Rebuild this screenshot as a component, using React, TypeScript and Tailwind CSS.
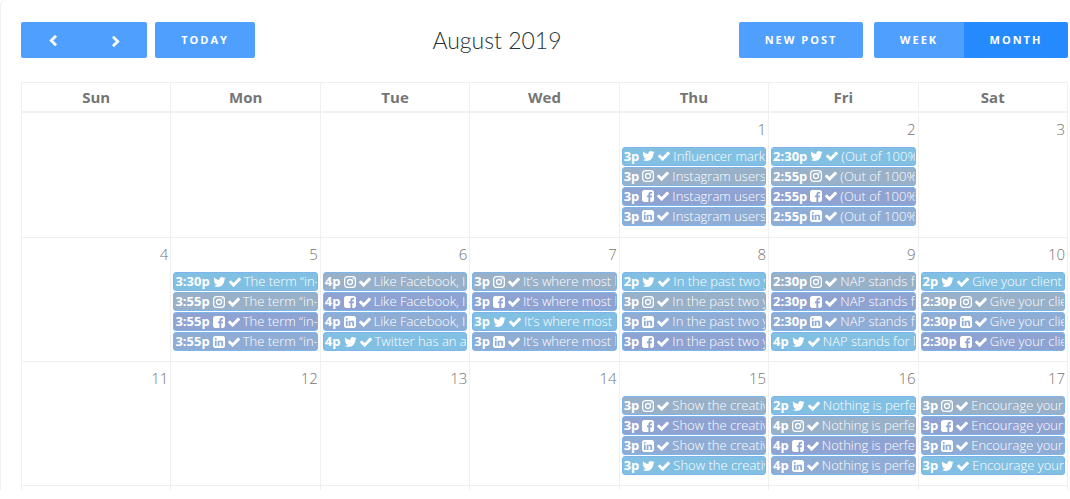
type Network = "twitter" | "instagram" | "facebook" | "linkedin";

type Post = {
	time: string;
	network: Network;
	title: string;
};

type Day = {
	date: number | null;
	posts: Post[];
};

const post = (time: string, network: Network, title: string): Post => ({ time, network, title });

const day = (date: number | null, posts: Post[] = []): Day => ({ date, posts });

const weekdays = ["Sun", "Mon", "Tue", "Wed", "Thu", "Fri", "Sat"];

const weeks: Day[][] = [
	[
		day(null),
		day(null),
		day(null),
		day(null),
		day(1, [
			post("3p", "twitter", "Influencer mark"),
			post("3p", "instagram", "Instagram users"),
			post("3p", "facebook", "Instagram users"),
			post("3p", "linkedin", "Instagram users"),
		]),
		day(2, [
			post("2:30p", "twitter", "(Out of 100%"),
			post("2:55p", "instagram", "(Out of 100%"),
			post("2:55p", "facebook", "(Out of 100%"),
			post("2:55p", "linkedin", "(Out of 100%"),
		]),
		day(3),
	],
	[
		day(4),
		day(5, [
			post("3:30p", "twitter", "The term “in-"),
			post("3:55p", "instagram", "The term “in-"),
			post("3:55p", "facebook", "The term “in-"),
			post("3:55p", "linkedin", "The term “in-"),
		]),
		day(6, [
			post("4p", "instagram", "Like Facebook, I"),
			post("4p", "facebook", "Like Facebook, I"),
			post("4p", "linkedin", "Like Facebook, I"),
			post("4p", "twitter", "Twitter has an a"),
		]),
		day(7, [
			post("3p", "instagram", "It’s where most l"),
			post("3p", "facebook", "It’s where most l"),
			post("3p", "twitter", "It’s where most"),
			post("3p", "linkedin", "It’s where most l"),
		]),
		day(8, [
			post("2p", "twitter", "In the past two y"),
			post("3p", "instagram", "In the past two y"),
			post("3p", "linkedin", "In the past two y"),
			post("3p", "facebook", "In the past two y"),
		]),
		day(9, [
			post("2:30p", "instagram", "NAP stands fo"),
			post("2:30p", "facebook", "NAP stands fo"),
			post("2:30p", "linkedin", "NAP stands fo"),
			post("4p", "twitter", "NAP stands for l"),
		]),
		day(10, [
			post("2p", "twitter", "Give your client"),
			post("2:30p", "instagram", "Give your clie"),
			post("2:30p", "linkedin", "Give your clie"),
			post("2:30p", "facebook", "Give your clie"),
		]),
	],
	[
		day(11),
		day(12),
		day(13),
		day(14),
		day(15, [
			post("3p", "instagram", "Show the creativ"),
			post("3p", "facebook", "Show the creativ"),
			post("3p", "linkedin", "Show the creativ"),
			post("3p", "twitter", "Show the creativ"),
		]),
		day(16, [
			post("2p", "twitter", "Nothing is perfe"),
			post("4p", "instagram", "Nothing is perfe"),
			post("4p", "facebook", "Nothing is perfe"),
			post("4p", "linkedin", "Nothing is perfe"),
		]),
		day(17, [
			post("3p", "instagram", "Encourage your"),
			post("3p", "facebook", "Encourage your"),
			post("3p", "linkedin", "Encourage your"),
			post("3p", "twitter", "Encourage your"),
		]),
	],
];

const eventColors: Record<Network, string> = {
	twitter: "bg-[#82c0e3]",
	instagram: "bg-[#98b0c8]",
	facebook: "bg-[#8fa3d2]",
	linkedin: "bg-[#8facd5]",
};

const NetworkIcon = ({ network }: { network: Network }) => {
	if (network === "instagram") {
		return (
			<svg className="size-3 shrink-0" viewBox="0 0 24 24" fill="none" stroke="currentColor" strokeWidth="2.6">
				<rect x="1.3" y="1.3" width="21.4" height="21.4" rx="5.6" />
				<circle cx="12" cy="12" r="5" />
				<circle cx="18.3" cy="5.7" r="1.5" fill="currentColor" stroke="none" />
			</svg>
		);
	}
	if (network === "twitter") {
		return (
			<svg className="h-3 w-[13px] shrink-0" viewBox="64 128 1664 1536" fill="currentColor">
				<path d="M1684 408q-67 98-162 167 1 14 1 42 0 130-38 259.5t-115.5 248.5-184.5 210.5-258 146-323 54.5q-271 0-496-145 35 4 78 4 225 0 401-138-105-2-188-64.5t-114-159.5q33 5 61 5 43 0 85-11-112-23-185.5-111.5t-73.5-205.5v-4q68 38 146 41-66-44-105-115t-39-154q0-88 44-163 121 149 294.5 238.5t371.5 99.5q-8-38-8-74 0-134 94.5-228.5t228.5-94.5q140 0 236 102 109-21 205-78-37 115-142 178 93-10 186-50z" />
			</svg>
		);
	}
	return (
		<svg className="size-3 shrink-0" viewBox="128 128 1536 1536" fill="currentColor">
			{network === "facebook" ? (
				<path d="M1376 128q119 0 203.5 84.5t84.5 203.5v960q0 119-84.5 203.5t-203.5 84.5h-188v-595h199l30-232h-229v-148q0-56 23.5-84t91.5-28l122-1v-207q-63-9-178-9-136 0-217.5 80t-81.5 226v171h-200v232h200v595h-532q-119 0-203.5-84.5t-84.5-203.5v-960q0-119 84.5-203.5t203.5-84.5h960z" />
			) : (
				<path d="M365 1414h231v-694h-231v694zm246-908q-1-52-36-86t-93-34-94.5 34-36.5 86q0 51 35.5 85.5t92.5 34.5h1q59 0 95-34.5t36-85.5zm585 908h231v-398q0-154-73-233t-193-79q-136 0-209 117h2v-101h-231q3 66 0 694h231v-388q0-38 7-56 15-35 45-59.5t74-24.5q116 0 116 157v371zm468-998v960q0 119-84.5 203.5t-203.5 84.5h-960q-119 0-203.5-84.5t-84.5-203.5v-960q0-119 84.5-203.5t203.5-84.5h960q119 0 203.5 84.5t84.5 203.5z" />
			)}
		</svg>
	);
};

const CheckIcon = () => (
	<svg className="h-[14px] w-3 shrink-0" viewBox="121 0 1550 1792" fill="currentColor">
		<path d="M1671 566q0 40-28 68l-724 724-136 136q-28 28-68 28t-68-28l-136-136-362-362q-28-28-28-68t28-68l136-136q28-28 68-28t68 28l294 295 656-657q28-28 68-28t68 28l136 136q28 28 28 68z" />
	</svg>
);

const Chevron = ({ flip = false }: { flip?: boolean }) => (
	<svg className={flip ? "size-3 rotate-180" : "size-3"} viewBox="0 0 1792 1792" fill="currentColor" stroke="currentColor" strokeWidth="80">
		<path d="M1427 301l-531 531 531 531q19 19 19 45t-19 45l-166 166q-19 19-45 19t-45-19l-742-742q-19-19-19-45t19-45l742-742q19-19 45-19t45 19l166 166q19 19 19 45t-19 45z" />
	</svg>
);

const PostEvent = ({ time, network, title }: Post) => (
	<a
		href="#"
		className={`mb-px flex h-[19px] items-center gap-[3px] overflow-hidden rounded-[3px] border border-[#7db5ea] pl-px text-[13px] leading-[17px] whitespace-nowrap text-white ${eventColors[network]}`}
	>
		<span className="font-bold">{time}</span>
		<NetworkIcon network={network} />
		<CheckIcon />
		<span className="font-light">{title}</span>
	</a>
);

const toolbarButton = "h-9 pt-px text-[11px] font-bold uppercase text-white";

const Toolbar = () => (
	<div className="flex items-center justify-between tracking-[2px]">
		<div className="flex gap-2">
			<div className="flex">
				<button aria-label="Previous month" className={`${toolbarButton} flex w-[63px] items-center justify-center rounded-l-[2px] bg-[#4f9fff]`}>
					<Chevron />
				</button>
				<button aria-label="Next month" className={`${toolbarButton} flex w-[63px] items-center justify-center rounded-r-[2px] bg-[#4f9fff]`}>
					<Chevron flip />
				</button>
			</div>
			<button className={`${toolbarButton} w-[100px] rounded-[2px] bg-[#4f9fff]`}>Today</button>
		</div>
		<h2 className="font-['Lato'] text-[23px] leading-9 font-light tracking-normal text-[#263238]">August 2019</h2>
		<div className="flex gap-[11px]">
			<button className={`${toolbarButton} w-[124px] rounded-[2px] bg-[#4f9fff]`}>New Post</button>
			<div className="flex">
				<button className={`${toolbarButton} w-[90px] rounded-l-[2px] bg-[#4f9fff]`}>Week</button>
				<button aria-pressed="true" className={`${toolbarButton} w-[104px] rounded-r-[2px] bg-[#268aff]`}>
					Month
				</button>
			</div>
		</div>
	</div>
);

const App = () => {
	return (
		<div className="overflow-hidden rounded-tl-md border-l border-[#f0f0f0] bg-white pt-[22px] pr-[2px] pl-5 font-['Open_Sans',sans-serif] text-[#757575]">
			<Toolbar />
			<table className="mt-6 w-full table-fixed border-collapse">
				<thead>
					<tr>
						{weekdays.map((name) => (
							<th key={name} className="h-[29px] border border-b-2 border-[#f0f0f0] p-0 text-[15px] leading-5 font-bold">
								{name}
							</th>
						))}
					</tr>
				</thead>
				<tbody>
					{weeks.map((week, index) => (
						<tr key={index} className="h-[124px] first:h-[126px]">
							{week.map((d, i) => (
								<td key={i} className="border border-[#f0f0f0] px-[2px] pt-[6px] pb-0 align-top">
									<div className="mb-2 h-5 text-right text-[15px] leading-5 font-light">{d.date}</div>
									{d.posts.map((p) => (
										<PostEvent key={p.network} {...p} />
									))}
								</td>
							))}
						</tr>
					))}
					<tr className="h-1">
						{weekdays.map((name) => (
							<td key={name} className="border border-b-0 border-[#f0f0f0] p-0" />
						))}
					</tr>
				</tbody>
			</table>
		</div>
	);
};

export default App;
